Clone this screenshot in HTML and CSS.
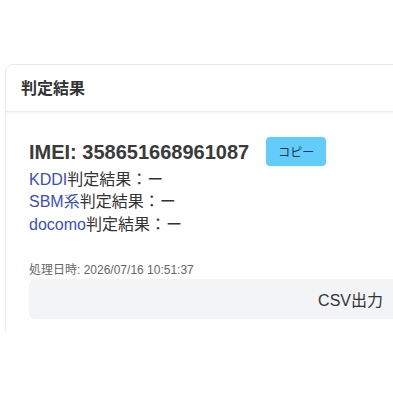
FILE: index.html
```html
<!DOCTYPE html>
<html lang="ja">
<head>
<meta charset="utf-8">
<link rel="stylesheet" href="styles.css">
</head>
<body>
<div class="page">
  <div class="clip">
    <div class="card">
      <div class="card-header">判定結果</div>
      <div class="card-body">
        <div class="imei-row">
          <span class="imei">IMEI: 358651668961087</span>
          <button class="copy">コピー</button>
        </div>
        <div class="results">
          <div class="line"><span class="carrier">KDDI</span>判定結果：ー</div>
          <div class="line"><span class="carrier">SBM系</span>判定結果：ー</div>
          <div class="line"><span class="carrier">docomo</span>判定結果：ー</div>
        </div>
        <div class="time">処理日時: 2026/07/16 10:51:37</div>
        <div class="csv">CSV出力</div>
      </div>
    </div>
  </div>
</div>
</body>
</html>
```
FILE: styles.css
```css
html, body {
  margin: 0;
  padding: 0;
  background: #fff;
  width: 393px;
  height: 393px;
  overflow: hidden;
  font-family: "Liberation Sans", Arial, "Noto Sans CJK JP", sans-serif;
  color: #333;
}
.page {
  padding: 64px 0 0 5px;
}
.clip {
  height: 268px;
  overflow: hidden;
  width: 388px;
}
.card {
  width: 420px;
  border: 1px solid #ececec;
  border-radius: 8px;
  box-sizing: border-box;
  background: #fff;
  height: 320px;
}
.card-header {
  height: 47px;
  box-sizing: border-box;
  padding: 0 0 3px 15px;
  display: flex;
  align-items: center;
  font-size: 16px;
  font-weight: bold;
  color: #333;
  border-bottom: 1px solid #ececec;
  box-shadow: 0 1px 3px rgba(0,0,0,0.06);
}
.card-body {
  padding: 25px 23px 12px 23px;
}
.imei-row {
  display: flex;
  align-items: center;
  gap: 17px;
  height: 29px;
}
.imei {
  font-size: 20px;
  font-weight: bold;
  color: #3a3a3a;
  line-height: 28px;
}
.copy {
  width: 60px;
  height: 29px;
  border: none;
  border-radius: 4px;
  background: #62cdfb;
  color: #1e3048;
  font-family: "Liberation Sans", Arial, "Noto Sans CJK JP", sans-serif;
  font-size: 12px;
  padding: 0;
}
.results {
  margin-top: 3px;
}
.line {
  font-size: 16px;
  line-height: 22.4px;
  color: #333;
}
.carrier {
  color: #3b4ec4;
}
.time {
  margin-top: 25px;
  font-size: 12px;
  line-height: 18px;
  color: #666;
}
.csv {
  margin-top: 0;
  height: 40px;
  background: #f3f4f6;
  border-radius: 6px;
  display: flex;
  align-items: center;
  justify-content: flex-end;
  padding-right: 18px;
  font-size: 16px;
  color: #333;
}
```
